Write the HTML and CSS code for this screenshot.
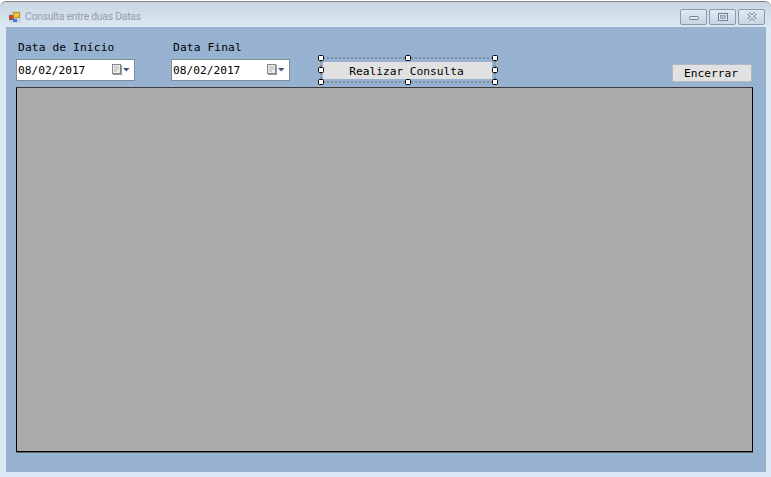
FILE: index.html
```html
<!DOCTYPE html>
<html lang="pt">
<head>
<meta charset="utf-8">
<title>Consulta entre duas Datas</title>
<link rel="stylesheet" href="styles.css">
</head>
<body>
<div class="window">
  <header class="titlebar">
    <svg class="app-icon" width="12" height="12" viewBox="0 0 12 12">
      <rect x="0" y="0" width="12" height="12" fill="#cdd5de"/>
      <rect x="0.500" y="4.500" width="4" height="4" fill="#d8392b" stroke="#8a5a50"/>
      <rect x="4.500" y="1.500" width="6" height="5" fill="#f3c13a" stroke="#b98d2a"/>
      <rect x="4" y="8" width="4" height="3" fill="#3b78d8"/>
    </svg>
    <span class="title">Consulta entre duas Datas</span>
    <div class="caption-buttons">
      <div class="cap"><svg width="12" height="8" viewBox="0 0 12 8"><rect x="1.500" y="3.500" width="9" height="3" rx="1" fill="#e4e8ec" stroke="#6d7f92"/></svg></div>
      <div class="cap"><svg width="12" height="8" viewBox="0 0 12 8"><rect x="1.500" y="0.500" width="9" height="7" fill="#e4e8ec" stroke="#6d7f92"/><rect x="3.500" y="2.500" width="5" height="3" fill="#a9bccf" stroke="#6d7f92" stroke-width="0.5"/></svg></div>
      <div class="cap"><svg width="12" height="9" viewBox="0 0 12 9"><path d="M2.500 1 L9.500 8 M9.500 1 L2.500 8" stroke="#6f7d8c" stroke-width="3.200" fill="none"/><path d="M2.500 1 L9.500 8 M9.500 1 L2.500 8" stroke="#eceff2" stroke-width="1.600" fill="none"/></svg></div>
    </div>
  </header>
  <main class="client">
    <div class="controls">
      <div class="field">
        <label class="label">Data de Início</label>
        <div class="datebox"><span class="date">08/02/2017</span>
          <svg class="cal" width="20" height="12" viewBox="0 0 20 12"><rect x="1" y="1" width="9" height="10" fill="#9a9a9a"/><rect x="0.500" y="0.500" width="8" height="9" fill="#ececec" stroke="#858585"/><path d="M2 3h5M2 5h5M2 7h3" stroke="#b5b5b5"/><path d="M11 4h6.500l-3.250 3.500z" fill="#3a5680"/></svg>
        </div>
      </div>
      <div class="field">
        <label class="label">Data Final</label>
        <div class="datebox"><span class="date">08/02/2017</span>
          <svg class="cal" width="20" height="12" viewBox="0 0 20 12"><rect x="1" y="1" width="9" height="10" fill="#9a9a9a"/><rect x="0.500" y="0.500" width="8" height="9" fill="#ececec" stroke="#858585"/><path d="M2 3h5M2 5h5M2 7h3" stroke="#b5b5b5"/><path d="M11 4h6.500l-3.250 3.500z" fill="#3a5680"/></svg>
        </div>
      </div>
      <div class="selected">
        <button class="btn consult">Realizar Consulta</button>
        <i class="handle tl"></i><i class="handle tc"></i><i class="handle tr"></i>
        <i class="handle ml"></i><i class="handle mr"></i>
        <i class="handle bl"></i><i class="handle bc"></i><i class="handle br"></i>
      </div>
      <button class="btn close">Encerrar</button>
    </div>
    <div class="grid"></div>
  </main>
</div>
</body>
</html>
```

FILE: styles.css
```css
* { box-sizing: border-box; }
html, body { margin: 0; height: 100%; }
body { background: #fff; overflow: hidden; padding-top: 1px; }
.window {
  width: 771px;
  height: 476px;
  display: flex;
  flex-direction: column;
  padding: 0 5px 5px 6px;
  border-top: 1px solid #7d8287;
  border-radius: 6px 6px 0 0;
  background: linear-gradient(180deg, #c9d5e1 0, #dce8f4 26px, #dce9f6 100%);
}
.titlebar {
  height: 25px;
  flex: none;
  display: flex;
  align-items: center;
  padding: 2px 0 0 3px;
}
.app-icon { flex: none; margin-top: 3px; }
.title {
  margin: 2px 0 0 4px;
  font: 10.400px Roboto, sans-serif;
  letter-spacing: -0.24px;
  color: #979da4;
}
.caption-buttons {
  margin-left: auto;
  margin-right: 1px;
  margin-top: 2px;
  display: flex;
  gap: 2px;
}
.cap {
  width: 27px;
  height: 16px;
  border: 1px solid #8a9bb0;
  border-radius: 2px;
  background: linear-gradient(180deg, #dfe9f3, #c8d6e4);
  display: flex;
  align-items: center;
  justify-content: center;
}
.client {
  flex: 1;
  min-height: 0;
  display: flex;
  flex-direction: column;
  padding: 0 13px 20px 10px;
  background: #98b3d1;
  font: 11.200px "DejaVu Sans Mono", monospace;
  color: #000;
}
.controls {
  height: 60px;
  flex: none;
  display: flex;
  align-items: flex-end;
}
.field {
  width: 119px;
  margin-right: 36px;
  margin-bottom: 6px;
}
.label {
  display: block;
  height: 18px;
  padding: 0 0 0 2px;
  line-height: 14px;
  letter-spacing: 0.15px;
}
.datebox {
  height: 22px;
  background: #fff;
  border: 1px solid #7f8c99;
  display: flex;
  align-items: center;
  padding-left: 1px;
}
.date { flex: 1; }
.cal { margin-right: 2px; flex: none; }
.selected {
  position: relative;
  width: 176px;
  height: 26px;
  margin-left: -6px;
  margin-right: 176px;
  margin-bottom: 4px;
  padding: 3px 2px 2px 1px;
  border: 2px dotted #7d8a9a;
  flex: none;
}
.btn {
  font: inherit;
  color: #000;
  background: #e1e1e1;
  border: 1px solid #adb9c6;
  padding: 2px 2px 0 0;
}
.consult { width: 100%; height: 100%; border: none; }
.close { width: 80px; height: 18px; flex: none; margin-bottom: 5px; line-height: 14px; }
.handle {
  position: absolute;
  width: 6px;
  height: 6px;
  background: #fff;
  border: 1px solid #000;
  border-radius: 1.500px;
}
.tl { left: -4px; top: -4px; }
.tc { left: 83px; top: -4px; }
.tr { right: -4px; top: -4px; }
.ml { left: -4px; top: 8px; }
.mr { right: -4px; top: 8px; }
.bl { left: -4px; bottom: -4px; }
.bc { left: 83px; bottom: -4px; }
.br { right: -4px; bottom: -4px; }
.grid {
  flex: 1;
  min-height: 0;
  background: #ababab;
  border: 1px solid #000;
  border-top-color: #3c3c3c;
  box-shadow: 0 1px 0 #5c6470;
}
```
